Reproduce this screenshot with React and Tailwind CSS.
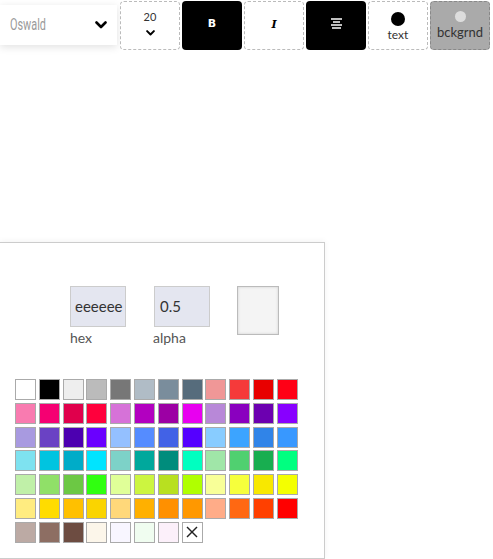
import React from 'react';

const swatches = [
  ['#ffffff', '#000000', '#eeeeee', '#bbbbbb', '#777777', '#b0bcc6', '#7a8d9c', '#566c7c', '#f09797', '#f53a3a', '#e80000', '#ff0016'],
  ['#f97bb0', '#f50072', '#e0004c', '#ff003c', '#d672d8', '#b200c0', '#9c00a4', '#e800f0', '#b888d8', '#8a00bf', '#6c00b0', '#8800ff'],
  ['#a89ae0', '#6a42c4', '#4c00b0', '#6a00ff', '#94c0ff', '#558cff', '#4262e6', '#5500ff', '#88ccff', '#3ca4ff', '#3084e8', '#3898ff'],
  ['#7ee2f0', '#00c4e0', '#00acc8', '#00e4ff', '#7dd2c8', '#00a89c', '#008c7c', '#00ffc0', '#a0e6a8', '#50d070', '#18ae50', '#00ff80'],
  ['#c0f0a8', '#90e068', '#6cc844', '#30ff10', '#e0ff98', '#ccf540', '#b8e020', '#b0ff00', '#f8ff98', '#f6ff3c', '#f8e800', '#f4ff00'],
  ['#ffec80', '#ffdc00', '#ffc000', '#fad400', '#ffd87a', '#ffb000', '#ff9000', '#ff9800', '#ffac88', '#ff6812', '#ff4000', '#ff0000'],
  ['#bcaaa4', '#8d6e63', '#6d4c41', '#fcf6ea', '#f8f6ff', '#f0fdf0', '#fcf0fa', null],
];

const Chevron = ({ className }) => (
  <svg viewBox="0 0 12 8" className={className} fill="none" stroke="currentColor" strokeWidth="2.6" strokeLinecap="round" strokeLinejoin="round">
    <polyline points="1.5,1.5 6,6 10.5,1.5" />
  </svg>
);

const ToolButton = ({ dark, gray, children }) => (
  <div
    className={
      'w-[60px] h-[49px] rounded-[4px] flex flex-col items-center shrink-0 overflow-hidden ' +
      (dark
        ? 'bg-black'
        : gray
        ? 'bg-[#aaaaaa] border border-dashed border-[#888888]'
        : 'bg-white border border-dashed border-[#bbbbbb]')
    }
  >
    {children}
  </div>
);

export default function App() {
  return (
    <div className="w-[493px] h-[559px] bg-white overflow-hidden font-['Lato',sans-serif]">
      {/* toolbar */}
      <div className="flex items-start pt-px">
        <div className="mt-[4px] w-[117px] h-10 bg-white shadow-[0_2px_8px_rgba(0,0,0,0.12)] flex items-center pl-[10px] pr-[10px]">
          <span className="text-[16px] text-[#9a9a9a] font-['Roboto',sans-serif] scale-x-[0.68] origin-left inline-block w-[34px] whitespace-nowrap">
            Oswald
          </span>
          <Chevron className="ml-auto w-[12px] h-[8px] text-black" />
        </div>
        <div className="ml-[3px] flex gap-[2px]">
          <ToolButton>
            <span className="mt-[9px] text-[11px] leading-none text-[#333]">20</span>
            <Chevron className="mt-[8px] w-[9px] h-[6px] text-black" />
          </ToolButton>
          <ToolButton dark>
            <span className="mt-[17px] text-[11px] leading-none font-bold text-white font-['DejaVu_Sans',sans-serif]">B</span>
          </ToolButton>
          <ToolButton>
            <span className="mt-[17px] text-[11px] leading-none font-bold italic text-black font-['DejaVu_Serif',serif]">I</span>
          </ToolButton>
          <ToolButton dark>
            <svg viewBox="0 0 11 11" className="mt-[17px] w-[11px] h-[11px]" stroke="white" strokeWidth="1.3">
              <line x1="0" y1="1" x2="11" y2="1" />
              <line x1="2" y1="4" x2="9" y2="4" />
              <line x1="0" y1="7" x2="11" y2="7" />
              <line x1="1" y1="10" x2="10" y2="10" />
            </svg>
          </ToolButton>
          <ToolButton>
            <div className="mt-[10px] w-[14px] h-[14px] rounded-full bg-black" />
            <span className="mt-[3px] text-[12px] leading-none text-[#333]">text</span>
          </ToolButton>
          <ToolButton gray>
            <div className="mt-[9px] w-[11px] h-[11px] rounded-full bg-[#dddddd]" />
            <span className="mt-[4px] ml-[6px] self-start text-[13px] leading-none text-[#333] whitespace-nowrap">bckgrnd</span>
          </ToolButton>
        </div>
      </div>

      {/* color picker panel */}
      <div className="mt-[192px] w-[325px] h-[317px] border border-l-0 border-[#cccccc] shadow-[0_-1px_6px_rgba(0,0,0,0.05)] pt-[43px]">
        <div className="flex items-start pl-[70px]">
          <div className="flex flex-col">
            <div className="w-[56px] h-[41px] bg-[#e4e6f0] border border-[#cccccc] flex items-center pl-[4px] text-[15px] text-[#333] overflow-hidden whitespace-nowrap">
              eeeeee
            </div>
            <span className="mt-[2px] text-[14px] text-[#555] leading-[18px]">hex</span>
          </div>
          <div className="ml-[28px] flex flex-col">
            <div className="w-[56px] h-[41px] bg-[#e4e6f0] border border-[#cccccc] flex items-center pl-[5px] text-[15px] text-[#333]">
              0.5
            </div>
            <span className="mt-[2px] -ml-px text-[14px] text-[#555] leading-[18px]">alpha</span>
          </div>
          <div className="ml-[27px] w-[42px] h-[49px] bg-[#f4f4f4] border border-[#bbbbbb] shadow-[inset_0_0_3px_rgba(0,0,0,0.15)]" />
        </div>

        <div className="mt-[32px] ml-[15px] grid grid-cols-[repeat(12,21px)] gap-x-[2.8px] gap-y-[2.8px]">
          {swatches.flat().map((c, i) =>
            c ? (
              <div key={i} className="w-[21px] h-[21px] border border-[#aaaaaa]" style={{ backgroundColor: c }} />
            ) : (
              <div key={i} className="w-[21px] h-[21px] border border-[#aaaaaa] bg-white flex items-center justify-center">
                <svg viewBox="0 0 12 12" className="w-[12px] h-[12px]" stroke="#222" strokeWidth="1.4">
                  <line x1="1" y1="1" x2="11" y2="11" />
                  <line x1="11" y1="1" x2="1" y2="11" />
                </svg>
              </div>
            )
          )}
        </div>
      </div>
    </div>
  );
}
